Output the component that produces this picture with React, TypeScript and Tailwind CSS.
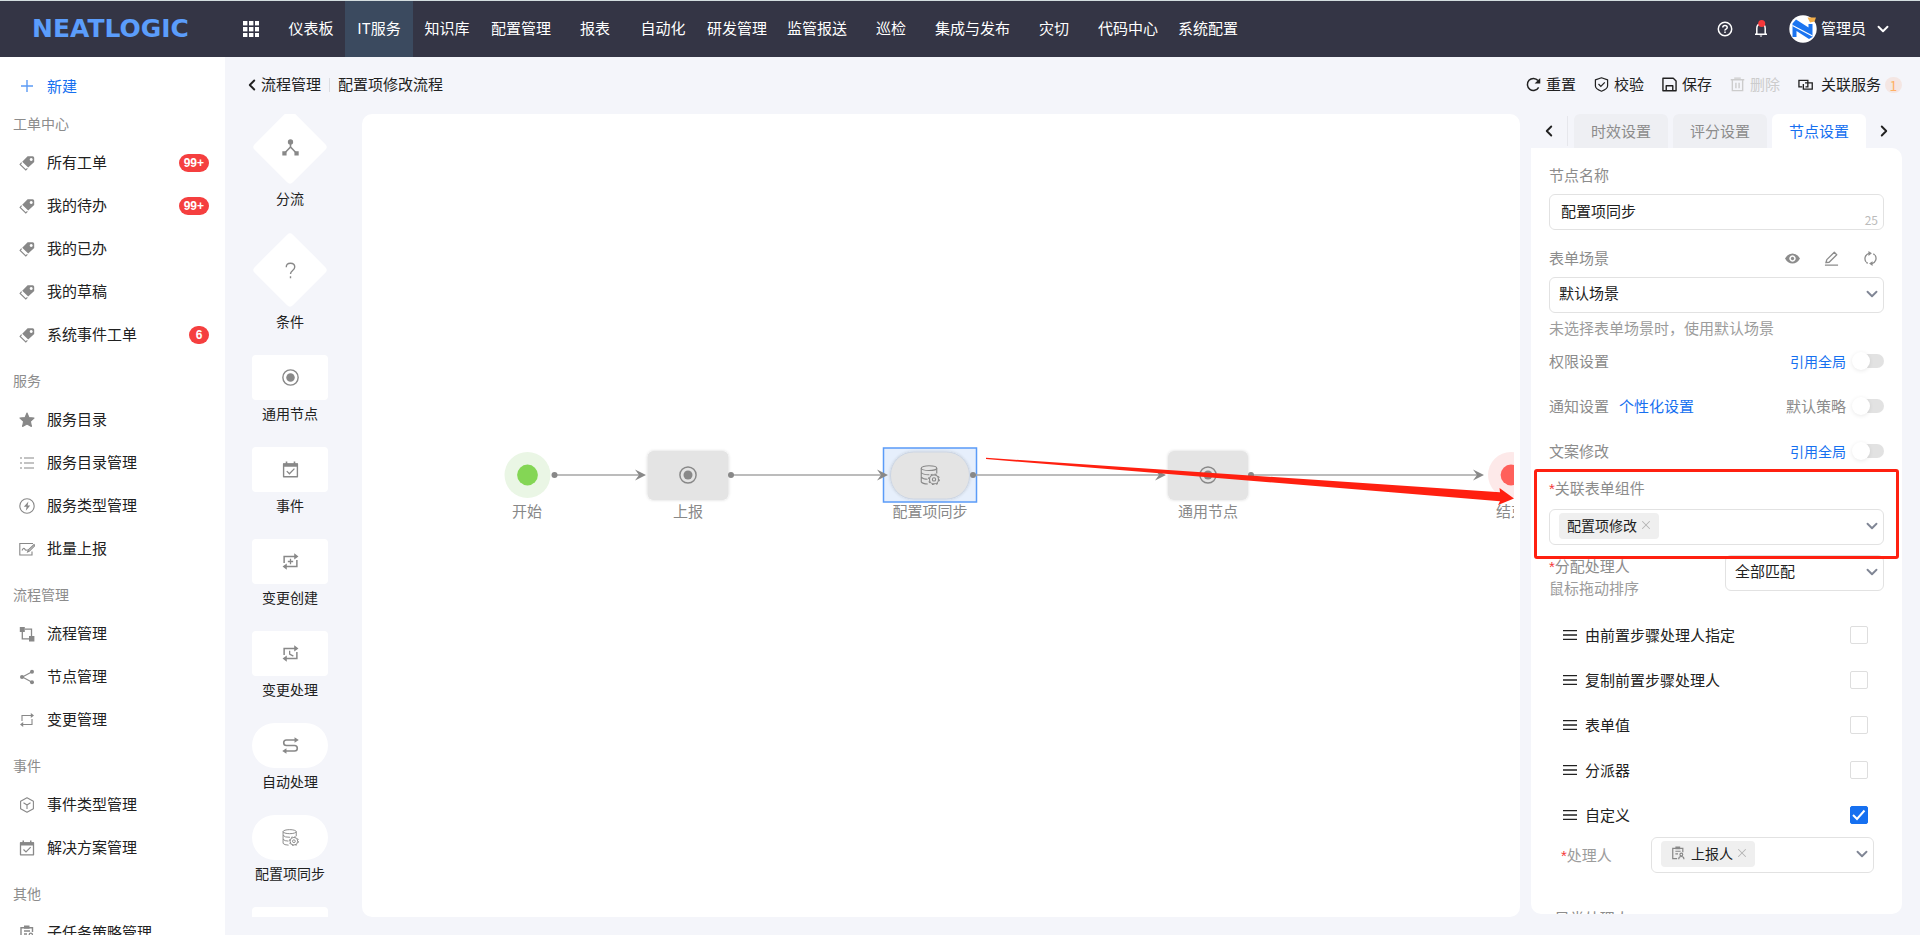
import React, { useState } from "react";
import { ChevronDown, ChevronLeft, ChevronRight, X } from "lucide-react";

type IconProps = { className?: string };
type IconComp = (p: IconProps) => React.ReactElement;

const svg = (children: React.ReactNode): IconComp =>
  function Icon({ className = "size-4" }: IconProps) {
    return (
      <svg
        viewBox="0 0 16 16"
        fill="none"
        stroke="currentColor"
        strokeWidth="1.1"
        className={className}
        aria-hidden="true"
      >
        {children}
      </svg>
    );
  };

const TagIcon = svg(
  <>
    <path
      fill="currentColor"
      stroke="none"
      fillRule="evenodd"
      d="M8.6 1.2H13.6Q15.2 1.2 15.2 2.8V7L9.2 12.6L3.2 6.8ZM12.2 2.9a1.5 1.5 0 1 0 .01 0Z"
    />
    <path d="M2.6 7.6L1.1 9.4L6.8 15L8.4 13.4" />
  </>
);
const StarIcon = svg(
  <path
    fill="currentColor"
    stroke="currentColor"
    strokeLinejoin="round"
    d="M8 1L10 5.6L15 6L11.4 9.4L12.4 14.4L8 12L3.6 14.4L4.6 9.4L1 6L6 5.6Z"
  />
);
const ListIcon = svg(<path strokeWidth="1.2" d="M1 3h2M1 8h2M1 13h2M5 3h10M5 8h10M5 13h10" />);
const BoltIcon = svg(
  <>
    <circle cx="8" cy="8" r="7.2" />
    <path fill="currentColor" stroke="none" d="M9.4 3.4L4.8 8.8h2.8L6.8 12.8L11.2 7.4H8.6Z" />
  </>
);
const BatchIcon = svg(
  <>
    <path d="M13 10.5V14H.8V2.5H14" />
    <path d="M3 9.5q1.5-3.5 2.8-1.4t2.6.4M8.6 11l.6-2L15 3.6l1 1-5.600 5.500z" />
  </>
);
const FlowIcon = svg(
  <>
    <path fill="currentColor" stroke="none" d="M.8 1h5v5h-5zM10 10h5.400v5.400H10z" />
    <path strokeWidth="1.3" d="M6 3.200h6.500V10M3.300 6v6.800H10" />
  </>
);
const ShareIcon = svg(
  <>
    <path d="M12.600 3L3.400 8L12.600 13" />
    <g fill="currentColor" stroke="none">
      <circle cx="13" cy="2.800" r="2" />
      <circle cx="3" cy="8" r="2" />
      <circle cx="13" cy="13.200" r="2" />
    </g>
  </>
);
const SwapIcon = svg(
  <>
    <path d="M3 9V3.500h10M13 7v5.500H3" />
    <path fill="currentColor" stroke="none" d="M11.800 1L15 3.500L11.800 6ZM4.200 10L1 12.500L4.200 15Z" />
  </>
);
const CubeIcon = svg(
  <path strokeLinejoin="round" d="M8 .8L14.400 4.300V11.700L8 15.200L1.600 11.700V4.300ZM4.500 5.800L8 8L11.500 5.800M8 8V12" />
);
const CalendarIcon = svg(
  <>
    <path strokeWidth="1.300" strokeLinejoin="round" d="M1.500 2.800h13v12h-13z" />
    <path fill="currentColor" stroke="none" d="M1 2.300h14V5.500H1zM3.500.5H5V3H3.500zM11 .5h1.500V3H11z" />
    <path strokeWidth="1.200" d="M4.500 9.500L7 12L11.700 7.200" />
  </>
);
const ClipIcon = svg(
  <>
    <path strokeWidth="1.400" d="M7 14.500H2V2.800h11.500V7M5 6h6M5 9h3" />
    <path fill="currentColor" stroke="none" d="M5 .5h5.500v3.200H5z" />
    <circle cx="11.800" cy="9.800" r="1.600" strokeWidth="1.300" />
    <path strokeWidth="1.300" d="M8.800 15q0-3 3-3t3 3" />
  </>
);
const ForkIcon = svg(
  <>
    <path strokeWidth="1.500" d="M8 3v5M8 7.500L2.800 13M8 7.500L13.200 13" />
    <circle cx="8" cy="2.800" r="2.500" fill="currentColor" stroke="none" />
    <path fill="currentColor" stroke="none" d="M.3 11.500h4v4h-4zM11.700 11.500h4v4h-4z" />
  </>
);
const QuestionIcon = svg(
  <path strokeWidth="1.300" d="M4 5Q4 1.200 8 1.200T12 4.800Q12 6.500 10 8T8 11.300M8 13.500v1.800" />
);
const RadioIcon = svg(
  <>
    <circle cx="8" cy="8" r="7.200" strokeWidth="1.300" />
    <circle cx="8" cy="8" r="4" fill="currentColor" stroke="none" />
  </>
);
const swapFrame = (
  <>
    <path strokeWidth="1.400" d="M2 9.500V3.200h10.500M14 6.500v6.300H3.500" />
    <path fill="currentColor" stroke="none" d="M11.500.2L15.500 3.200L11.500 6.200ZM4.500 9.800L.5 12.800L4.500 15.800Z" />
  </>
);
const SwapPlusIcon = svg(
  <>
    {swapFrame}
    <path strokeWidth="1.200" d="M8 5.500v5M5.500 8h5" />
  </>
);
const SwapClockIcon = svg(
  <>
    {swapFrame}
    <path strokeWidth="1.200" d="M7.200 5.500v3l3.500 2" />
  </>
);
const AutoIcon = svg(
  <>
    <path strokeWidth="1.500" d="M12.500 2.800H4.200a2.600 2.600 0 0 0 0 5.200h7.600a2.600 2.600 0 0 1 0 5.200H3.500" />
    <path fill="currentColor" stroke="none" d="M11.800.2L15.800 2.800L11.800 5.400ZM4.200 10.600L.2 13.200L4.200 15.800Z" />
  </>
);
const DatabaseIcon = svg(
  <g strokeWidth=".9">
    <ellipse cx="7.200" cy="2.500" rx="6.200" ry="1.900" />
    <path d="M1 2.500v11q1 1.600 5.200 1.700M13.400 2.500v4.300M1 6q1.500 2 6.500 1.800M1 9.700q1.500 1.700 5 1.700" />
    <circle cx="11.200" cy="11.500" r="3.600" />
    <circle cx="11.200" cy="11.500" r="1.300" />
    <circle cx="11.200" cy="11.500" r="4.300" strokeDasharray="1.500 1.880" />
  </g>
);
const ReloadIcon = svg(
  <>
    <path strokeWidth="1.600" d="M13.500 11A6.400 6.400 0 1 1 12.800 3.800" />
    <path fill="currentColor" stroke="none" d="M15.200 1v6H9.200Z" />
  </>
);
const ShieldIcon = svg(
  <>
    <path strokeWidth="1.300" strokeLinejoin="round" d="M8 .8L14.500 3V9.500Q14.500 12.500 8 15.200Q1.500 12.500 1.500 9.500V3Z" />
    <path strokeWidth="1.300" d="M4.800 7.500L7.300 10L11.500 5.800" />
  </>
);
const SaveIcon = svg(
  <path strokeWidth="1.500" strokeLinejoin="round" d="M1 1.300h11l3 3V14.700H1zM4.500 14.500V9.300h7v5.200" />
);
const TrashIcon = svg(
  <path strokeWidth="1.500" d="M.8 3h14.400M4.500 1.200h7M2.500 3.500v11h11v-11M6.300 6v6M9.700 6v6" />
);
const LinkIcon = svg(
  <path strokeWidth="1.400" d="M4.500 10.500H1V3.500h9.500v7H8M7.500 6.200h7.700v6.800H5.700V7.500" />
);
const EyeIcon = svg(
  <path
    fill="currentColor"
    stroke="none"
    fillRule="evenodd"
    d="M0 8Q3 2.600 8 2.600T16 8Q13 13.400 8 13.400T0 8ZM8 4.600a3.400 3.400 0 1 0 .01 0ZM8 6.200a1.800 1.800 0 1 1-.01 0Z"
  />
);
const PencilIcon = svg(
  <path strokeWidth="1.400" strokeLinejoin="round" d="M1 15h14M2 12.500L3 9.200L11 1.400L13.600 4L5.500 12Z" />
);
const SyncIcon = svg(
  <>
    <path strokeWidth="1.400" d="M3.200 11.500A5.800 5.800 0 0 1 6.500 2.500M12.800 4.500A5.800 5.800 0 0 1 9.500 13.500" />
    <path fill="currentColor" stroke="none" d="M5.800 0L9.500 2.500L5.800 5.200ZM10.200 10.800L6.500 13.400L10.200 16Z" />
    <path strokeWidth="1.400" d="M11 3l1.500 1.200M3.500 12L5 13.200" />
  </>
);
const BurgerIcon = svg(<path strokeWidth="1.500" d="M0 3h16M0 8h16M0 13h16" />);

const navItems = [
  "仪表板",
  "IT服务",
  "知识库",
  "配置管理",
  "报表",
  "自动化",
  "研发管理",
  "监管报送",
  "巡检",
  "集成与发布",
  "灾切",
  "代码中心",
  "系统配置",
];

type MenuItem = { text: string; icon: IconComp; badge?: string };
const menu: { title: string; items: MenuItem[] }[] = [
  {
    title: "工单中心",
    items: [
      { text: "所有工单", icon: TagIcon, badge: "99+" },
      { text: "我的待办", icon: TagIcon, badge: "99+" },
      { text: "我的已办", icon: TagIcon },
      { text: "我的草稿", icon: TagIcon },
      { text: "系统事件工单", icon: TagIcon, badge: "6" },
    ],
  },
  {
    title: "服务",
    items: [
      { text: "服务目录", icon: StarIcon },
      { text: "服务目录管理", icon: ListIcon },
      { text: "服务类型管理", icon: BoltIcon },
      { text: "批量上报", icon: BatchIcon },
    ],
  },
  {
    title: "流程管理",
    items: [
      { text: "流程管理", icon: FlowIcon },
      { text: "节点管理", icon: ShareIcon },
      { text: "变更管理", icon: SwapIcon },
    ],
  },
  {
    title: "事件",
    items: [
      { text: "事件类型管理", icon: CubeIcon },
      { text: "解决方案管理", icon: CalendarIcon },
    ],
  },
  { title: "其他", items: [{ text: "子任务策略管理", icon: ClipIcon }] },
];

type Shape = "diamond" | "rect" | "pill";
const palette: { text: string; icon: IconComp; shape: Shape }[] = [
  { text: "分流", icon: ForkIcon, shape: "diamond" },
  { text: "条件", icon: QuestionIcon, shape: "diamond" },
  { text: "通用节点", icon: RadioIcon, shape: "rect" },
  { text: "事件", icon: CalendarIcon, shape: "rect" },
  { text: "变更创建", icon: SwapPlusIcon, shape: "rect" },
  { text: "变更处理", icon: SwapClockIcon, shape: "rect" },
  { text: "自动处理", icon: AutoIcon, shape: "pill" },
  { text: "配置项同步", icon: DatabaseIcon, shape: "pill" },
  { text: "", icon: RadioIcon, shape: "rect" },
];

function Header() {
  return (
    <header className="flex h-[57px] shrink-0 items-stretch border-t border-[#d3dddf] bg-[#343545] text-[15px] text-white">
      <a href="#" className="flex w-[225px] shrink-0 items-center pl-8">
        <span className="font-['DejaVu_Sans',sans-serif] text-[25px] font-bold text-[#5b9dfb]">NEATLOGIC</span>
      </a>
      <button type="button" aria-label="应用" className="flex w-[52px] items-center justify-center">
        <svg viewBox="0 0 16 16" className="size-4" fill="currentColor" aria-hidden="true">
          {[0, 6, 12].map((y) => [0, 6, 12].map((x) => <rect key={`${x}-${y}`} x={x} y={y} width="4.400" height="4.400" />))}
        </svg>
      </button>
      <nav className="flex">
        {navItems.map((t) => (
          <a
            key={t}
            href="#"
            className={`flex min-w-[68px] items-center justify-center px-2.5 pb-0.5 whitespace-nowrap ${
              t === "IT服务" ? "bg-[#3b4a5f]" : ""
            }`}
          >
            {t}
          </a>
        ))}
      </nav>
      <div className="ml-auto flex items-center pr-7">
        <button type="button" aria-label="帮助" className="mr-5">
          <svg viewBox="0 0 16 16" className="size-4" fill="none" stroke="currentColor" strokeWidth="1.500" aria-hidden="true">
            <circle cx="8" cy="8" r="6.700" />
            <path d="M5.800 6.500Q5.800 4.500 8 4.500T10.200 6.400Q10.200 7.500 9 8.100T8 9.600M8 10.600v1.400" />
          </svg>
        </button>
        <button type="button" aria-label="通知" className="mr-5">
          <svg viewBox="0 0 16 18" className="h-[18px] w-4" fill="none" aria-hidden="true">
            <path stroke="currentColor" strokeWidth="1.500" d="M2 14.300h12M3.800 14V8.500Q3.800 4 8 4t4.200 4.500V14" />
            <path fill="currentColor" d="M6.500 15.500h3L8 17z" />
            <circle cx="8.700" cy="3.500" r="3.500" fill="#f5383a" />
          </svg>
        </button>
        <button type="button" className="flex items-center gap-1">
          <svg viewBox="0 0 28 28" className="size-7" aria-hidden="true">
            <circle cx="14" cy="14" r="13.700" fill="#fff" />
            <path d="M3.500 8.500L7 4.500L19.500 12.500V9H23.500V22L20 24L7.500 16V22H3.500V12.500Z" fill="#1b74f0" />
            <path d="M3.500 10.500L23.500 21" stroke="#fff" strokeWidth="1.200" />
            <path d="M18.500 2.500L27 2.500L25.500 6.500L21 7.500Z" fill="#f5b04a" />
          </svg>
          <span className="pb-0.5">管理员</span>
          <ChevronDown className="ml-1 size-[18px]" strokeWidth={2.5} />
        </button>
      </div>
    </header>
  );
}

function Sidebar() {
  return (
    <aside className="w-[225px] shrink-0 overflow-hidden bg-white">
      <a href="#" className="flex h-[42px] items-center pt-4 pl-5 text-[15px] text-[#1670f0]">
        <svg viewBox="0 0 14 14" className="size-3.5" stroke="currentColor" opacity=".7" aria-hidden="true">
          <path d="M7 1v12M1 7h12" strokeWidth="1.400" />
        </svg>
        <span className="ml-[13px]">新建</span>
      </a>
      {menu.map((g) => (
        <section key={g.title}>
          <h2 className="pt-3.5 pb-2 pl-[13px] text-sm leading-5 text-[#8c8c8c]">{g.title}</h2>
          <ul>
            {g.items.map(({ text, icon: Icon, badge }) => (
              <li key={text}>
                <a href="#" className="flex h-[43px] items-center pr-4 pl-[19px] text-[15px] text-[#212121]">
                  <Icon className="size-4 shrink-0 text-[#888]" />
                  <span className="ml-3 whitespace-nowrap">{text}</span>
                  {badge && (
                    <span className="ml-auto flex h-[18px] min-w-5 items-center justify-center rounded-full bg-[#f53f3f] px-[5px] font-['Liberation_Sans',sans-serif] text-xs font-bold text-white">
                      {badge}
                    </span>
                  )}
                </a>
              </li>
            ))}
          </ul>
        </section>
      ))}
    </aside>
  );
}

function Palette() {
  return (
    <div className="w-[130px] shrink-0 overflow-hidden">
      <ul className="-mt-[5px]">
        {palette.map(({ text, icon: Icon, shape }, i) => (
          <li key={i} className="flex flex-col items-center">
            {shape === "diamond" ? (
              <span className="grid size-[76px] place-items-center">
                <span className="col-start-1 row-start-1 size-[54px] rotate-45 rounded-[4px] bg-white" />
                <Icon className="relative col-start-1 row-start-1 size-[17px] text-[#888]" />
              </span>
            ) : (
              <span
                className={`grid h-[45px] w-[76px] place-items-center bg-white ${
                  shape === "pill" ? "rounded-full" : "rounded-[4px]"
                }`}
              >
                <Icon className="size-[17px] text-[#888]" />
              </span>
            )}
            <span className="pt-[3px] pb-6 text-sm leading-5 text-[#212121]">{text}</span>
          </li>
        ))}
      </ul>
    </div>
  );
}

function Edge({ from, to }: { from: number; to: number }) {
  return (
    <g>
      <path d={`M${from} 361H${to - 4}`} stroke="#a6a6a6" strokeWidth="1.500" />
      <circle cx={from} cy="361" r="3" fill="#888" />
      <path d={`M${to} 361L${to - 11} 355.500L${to - 7} 361L${to - 11} 366.500Z`} fill="#888" />
    </g>
  );
}

function NodeLabel({ x, children }: { x: number; children: string }) {
  return (
    <text x={x} y="403" textAnchor="middle" fontSize="15" fill="#888">
      {children}
    </text>
  );
}

function Canvas() {
  return (
    <main className="min-w-0 flex-1 overflow-hidden rounded-[10px] bg-white pr-1.5">
      <svg className="size-full" role="img" aria-label="配置项修改流程">
        <defs>
          <filter id="soft" x="-20%" y="-20%" width="140%" height="140%">
            <feDropShadow dx="0" dy="0" stdDeviation="1.500" floodColor="#000" floodOpacity=".16" />
          </filter>
        </defs>
        <circle cx="165.500" cy="361" r="23" fill="#eaf6e5" />
        <circle cx="165.500" cy="361" r="10.400" fill="#84d655" />
        <NodeLabel x={165}>开始</NodeLabel>

        <rect x="285.500" y="337" width="81" height="49" rx="6" fill="#e4e4e4" filter="url(#soft)" />
        <svg x="317" y="352" width="18" height="18" viewBox="0 0 16 16" color="#888">
          <RadioIcon className="" />
        </svg>
        <NodeLabel x={326}>上报</NodeLabel>

        <rect x="521.500" y="334" width="93" height="54" fill="#e6effc" stroke="#5a9bf8" strokeWidth="1.500" />
        <rect x="528.500" y="338" width="79" height="47" rx="23" fill="#e4e4e4" stroke="#ccd5e3" filter="url(#soft)" />
        <svg x="558" y="351" width="20" height="20" viewBox="0 0 16 16" color="#888">
          <DatabaseIcon className="" />
        </svg>
        <NodeLabel x={568}>配置项同步</NodeLabel>

        <rect x="806" y="337" width="80" height="49" rx="6" fill="#e4e4e4" filter="url(#soft)" />
        <svg x="837" y="352" width="18" height="18" viewBox="0 0 16 16" color="#888">
          <RadioIcon className="" />
        </svg>
        <NodeLabel x={846}>通用节点</NodeLabel>

        <circle cx="1149" cy="361" r="23" fill="#fde9e9" />
        <circle cx="1149" cy="361" r="10.400" fill="#ff605b" />
        <NodeLabel x={1149}>结束</NodeLabel>

        <Edge from={192.5} to={284} />
        <Edge from={369} to={526} />
        <Edge from={611} to={804} />
        <Edge from={889} to={1122} />

        <path d="M624 343.800L1138 378.300L1137.500 374L1152 384.500L1136 391L1138 387.300L624 345Z" fill="#ff2010" />
      </svg>
    </main>
  );
}

function Toolbar() {
  const tools: [string, IconComp, string][] = [
    ["重置", ReloadIcon, "text-[#212121]"],
    ["校验", ShieldIcon, "text-[#212121]"],
    ["保存", SaveIcon, "text-[#212121]"],
    ["删除", TrashIcon, "text-[#cccccc]"],
  ];
  return (
    <div className="flex h-[57px] shrink-0 items-center pr-[18px] pb-0.5 pl-[18px] text-[15px] text-[#212121]">
      <a href="#" className="flex items-center">
        <ChevronLeft className="size-[18px]" strokeWidth={2.5} />
        流程管理
      </a>
      <span className="mx-2 h-3.5 w-px bg-[#dcdde2]" />
      <span>配置项修改流程</span>
      <div className="ml-auto flex items-center gap-[18px]">
        {tools.map(([t, Icon, tone]) => (
          <button key={t} type="button" disabled={t === "删除"} className={`flex items-center gap-[5px] ${tone}`}>
            <Icon className="size-[15px]" />
            {t}
          </button>
        ))}
        <button type="button" className="flex items-center">
          <LinkIcon className="size-[15px]" />
          <span className="ml-2">关联服务</span>
          <span className="ml-1 grid h-4 w-[17px] place-items-center rounded-full bg-[#f4e6e3] text-sm leading-4 text-[#ffb066]">
            1
          </span>
        </button>
      </div>
    </div>
  );
}

const field = "h-9 w-full appearance-none rounded-md border border-[#e2e2e2] bg-white text-[15px] text-[#212121] outline-none";
const chevron = "pointer-events-none absolute top-1/2 right-[3px] -mt-2.5 size-[18px] text-[#808695]";

function Picker({ id, value }: { id: string; value: string }) {
  return (
    <div className="relative">
      <select id={id} className={`${field} pr-7 pb-1 pl-[9px]`} defaultValue={value}>
        <option>{value}</option>
      </select>
      <ChevronDown className={chevron} strokeWidth={2.5} />
    </div>
  );
}

function TagPicker({ id, value, icon: Icon }: { id: string; value: string; icon?: IconComp }) {
  const [on, setOn] = useState(true);
  return (
    <div className="relative">
      <select id={id} className={field} defaultValue="">
        <option value="" label=" " />
      </select>
      {on && (
        <span className="absolute top-1 left-2.5 flex h-[26px] items-center rounded bg-[#efefef] pr-1.5 pb-0.5 pl-2 text-sm text-[#212121]">
          {Icon && <Icon className="mr-1.5 ml-0.5 size-3.5 text-[#888]" />}
          {value}
          <button type="button" aria-label="移除" onClick={() => setOn(false)} className="ml-0.5 text-[#b5b5b5]">
            <X className="size-3.5" strokeWidth={1.75} />
          </button>
        </span>
      )}
      <ChevronDown className={chevron} strokeWidth={2.5} />
    </div>
  );
}

function SwitchRow({ id, label, extra, text, tone }: { id: string; label: string; extra?: string; text: string; tone: string }) {
  return (
    <div className="flex h-[45px] items-center">
      <label htmlFor={id}>{label}</label>
      {extra && (
        <a href="#" className="ml-2.5 text-[#1670f0]">
          {extra}
        </a>
      )}
      <span className={`ml-auto ${tone}`}>{text}</span>
      <span className="relative ml-1.5 h-3.5 w-8">
        <input
          id={id}
          type="checkbox"
          role="switch"
          className="peer block size-full appearance-none rounded-full bg-[linear-gradient(90deg,#fff_40%,#e2e2e2_40%)] checked:bg-[#1670f0]"
        />
        <span className="pointer-events-none absolute -top-0.5 left-0 size-[18px] rounded-full bg-white shadow-[0_1px_4px_rgba(0,0,0,0.09)] peer-checked:left-3.5" />
      </span>
    </div>
  );
}

const Star = () => <span className="font-['Liberation_Sans',sans-serif] text-[#f5383a]">*</span>;

function NodePanel() {
  const tabs = ["时效设置", "评分设置", "节点设置"];
  const handlers = ["由前置步骤处理人指定", "复制前置步骤处理人", "表单值", "分派器", "自定义"];
  return (
    <aside className="mr-[18px] mb-[3px] ml-[11px] flex w-[371px] shrink-0 flex-col text-[15px] text-[#8c8c8c]">
      <div className="flex h-[34px] shrink-0">
        <button type="button" aria-label="上一个" className="grid w-9 place-items-center text-[#212121]">
          <ChevronLeft className="size-[18px]" strokeWidth={2.5} />
        </button>
        <span className="my-0.5 mr-1.5 w-px bg-[#e6e7ec]" />
        <div className="flex gap-[5px]" role="tablist">
          {tabs.map((t) => (
            <button
              key={t}
              type="button"
              role="tab"
              aria-selected={t === "节点设置"}
              className={`w-[94px] rounded-t-md ${t === "节点设置" ? "bg-white text-[#1670f0]" : "bg-[#eeeff3]"}`}
            >
              {t}
            </button>
          ))}
        </div>
        <button type="button" aria-label="下一个" className="grid flex-1 place-items-center text-[#212121]">
          <ChevronRight className="size-[18px]" strokeWidth={2.5} />
        </button>
      </div>

      <div className="min-h-0 flex-1 overflow-hidden rounded-b-[10px] rounded-tr-[10px] bg-white px-[18px] pt-4 leading-[22px]">
        <label htmlFor="name" className="block">
          节点名称
        </label>
        <div className="relative mt-2">
          <input id="name" defaultValue="配置项同步" className={`${field} pb-1 pl-[11px]`} />
          <span className="absolute right-1.5 bottom-0 text-xs leading-5 text-[#bbb]">25</span>
        </div>

        <div className="mt-[17px] mb-2 flex items-center">
          <label htmlFor="scene">表单场景</label>
          <div className="mr-1.5 ml-auto flex gap-6">
            <button type="button" aria-label="查看">
              <EyeIcon className="size-[15px]" />
            </button>
            <button type="button" aria-label="编辑">
              <PencilIcon className="size-[15px]" />
            </button>
            <button type="button" aria-label="刷新">
              <SyncIcon className="size-[15px]" />
            </button>
          </div>
        </div>
        <Picker id="scene" value="默认场景" />
        <p className="mt-1 leading-[21px] text-[#9c9c9c]">未选择表单场景时，使用默认场景</p>

        <SwitchRow id="auth" label="权限设置" text="引用全局" tone="text-sm text-[#1670f0]" />
        <SwitchRow id="notice" label="通知设置" extra="个性化设置" text="默认策略" tone="" />
        <SwitchRow id="copy" label="文案修改" text="引用全局" tone="text-sm text-[#1670f0]" />

        <div className="relative mt-1">
          <label htmlFor="widget" className="mb-[9px] block">
            <Star />
            关联表单组件
          </label>
          <TagPicker id="widget" value="配置项修改" />
          <span className="pointer-events-none absolute -inset-x-[15px] -top-2 -bottom-3.5 z-10 rounded-[3px] border-3 border-[#ff2010]" />
        </div>

        <div className="mt-2.5 flex items-start justify-between">
          <label htmlFor="match" className="block leading-[21px]">
            <Star />
            分配处理人
            <br />
            <span className="text-[#9c9c9c]">鼠标拖动排序</span>
          </label>
          <div className="w-[159px]">
            <Picker id="match" value="全部匹配" />
          </div>
        </div>

        <ul className="mt-3.5 pr-4 pl-3.5 text-[#212121]">
          {handlers.map((h) => (
            <li key={h} className="h-[45px]">
              <label className="flex h-full items-center">
                <BurgerIcon className="mr-2 size-3.5" />
                {h}
                <span className="relative ml-auto size-[18px]">
                  <input
                    type="checkbox"
                    defaultChecked={h === "自定义"}
                    className="peer block size-[18px] appearance-none rounded-[2px] border border-[#dedede] bg-white checked:border-[#1670f0] checked:bg-[#1670f0]"
                  />
                  <svg
                    viewBox="0 0 18 18"
                    className="pointer-events-none absolute inset-0 hidden size-full peer-checked:block"
                    fill="none"
                    stroke="#fff"
                    strokeWidth="2"
                    aria-hidden="true"
                  >
                    <path d="M3 9L7 13L14.500 4.500" />
                  </svg>
                </span>
              </label>
            </li>
          ))}
        </ul>
        <div className="flex items-center justify-between pr-2.5 pl-3">
          <label htmlFor="handler" className="text-[#9c9c9c]">
            <Star />
            处理人
          </label>
          <div className="w-[223px]">
            <TagPicker id="handler" value="上报人" icon={ClipIcon} />
          </div>
        </div>
        <div className="pt-[34px]">
          <Star />
          异常处理人
        </div>
      </div>
    </aside>
  );
}

export default function App() {
  return (
    <div className="flex h-screen flex-col overflow-hidden bg-[#f4f5fa] font-['Noto_Sans_CJK_SC','Noto_Sans',sans-serif] font-normal">
      <Header />
      <div className="flex min-h-0 flex-1">
        <Sidebar />
        <div className="flex min-w-0 flex-1 flex-col">
          <Toolbar />
          <div className="flex min-h-0 flex-1 pb-[18px]">
            <div className="flex min-h-0 min-w-0 flex-1">
              <Palette />
              <span className="w-[7px] shrink-0" />
              <Canvas />
            </div>
            <NodePanel />
          </div>
        </div>
      </div>
    </div>
  );
}
